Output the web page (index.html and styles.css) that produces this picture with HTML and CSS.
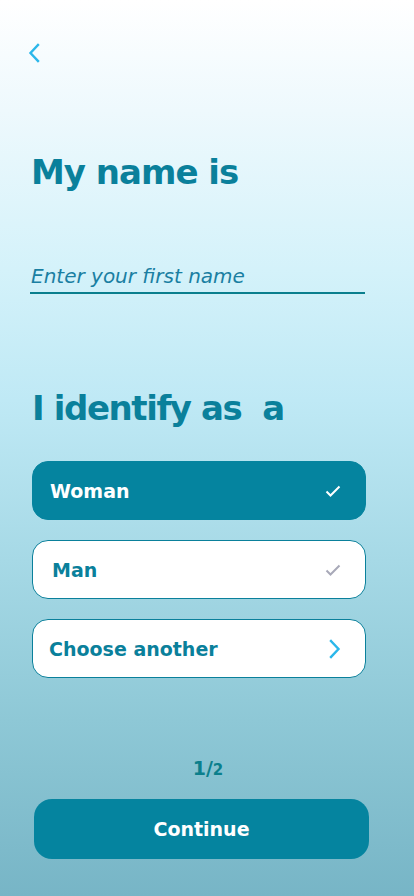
FILE: index.html
```html
<!DOCTYPE html>
<html lang="en">
<head>
<meta charset="utf-8">
<title>My name is</title>
<link rel="stylesheet" href="styles.css">
</head>
<body>
<main class="screen">
  <header class="topbar">
    <button class="back" aria-label="Back">
      <svg width="12" height="20" viewBox="0 0 12 20"><path d="M10 2 L2.5 10 L10 18" fill="none" stroke="#2bb7ea" stroke-width="2.4" stroke-linecap="square"/></svg>
    </button>
  </header>

  <h1 class="title title-first">My name is</h1>

  <label class="field">
    <input class="field-input" type="text" placeholder="Enter your first name">
  </label>

  <h2 class="title title-second">I identify as&nbsp; a</h2>

  <div class="options">
    <div class="option option-selected">
      <span class="option-label">Woman</span>
      <svg class="option-icon" width="16" height="12" viewBox="0 0 16 12"><path d="M1.5 6.5 L5.5 10.5 L14.5 1.5" fill="none" stroke="#ffffff" stroke-width="2"/></svg>
    </div>
    <div class="option">
      <span class="option-label option-label-man">Man</span>
      <svg class="option-icon" width="16" height="12" viewBox="0 0 16 12"><path d="M1.5 6.5 L5.5 10.5 L14.5 1.5" fill="none" stroke="#a8a9b8" stroke-width="2"/></svg>
    </div>
    <div class="option">
      <span class="option-label option-label-other">Choose another</span>
      <svg class="option-icon option-chevron" width="12" height="20" viewBox="0 0 12 20"><path d="M2 2 L9.5 10 L2 18" fill="none" stroke="#2bb7ea" stroke-width="2.4" stroke-linecap="square"/></svg>
    </div>
  </div>

  <div class="spacer"></div>

  <p class="pager">1/<span class="pager-small">2</span></p>

  <button class="continue">Continue</button>
</main>
</body>
</html>
```

FILE: styles.css
```css
* { box-sizing: border-box; }

html, body {
  margin: 0;
  padding: 0;
}

body {
  font-family: "DejaVu Sans", "Inter", sans-serif;
  background: #78b6c7;
}

.screen {
  width: 414px;
  height: 896px;
  display: flex;
  flex-direction: column;
  background: linear-gradient(180deg,
    #ffffff 0px,
    #eef9fd 110px,
    #d4f2fa 270px,
    #bfe9f5 400px,
    #a6d9e6 560px,
    #8ec8d6 720px,
    #77b5c6 896px);
  overflow: hidden;
}

.topbar {
  height: 100px;
  padding: 42px 0 0 27px;
}

.back {
  background: none;
  border: 0;
  padding: 0;
  margin: 0;
  width: 14px;
  height: 22px;
  display: flex;
  align-items: center;
  justify-content: center;
  cursor: pointer;
}

.title {
  margin: 0;
  padding-left: 31px;
  font-family: "DejaVu Sans", sans-serif;
  font-weight: 700;
  font-size: 34px;
  line-height: 40px;
  color: #0a809b;
}

.title-first {
  margin-top: 52px;
  letter-spacing: -1px;
}

.field {
  display: block;
  margin: 72px 49px 0 30px;
  border-bottom: 2px solid #0a7f8e;
}

.field-input {
  width: 100%;
  border: 0;
  background: transparent;
  padding: 0 0 4px 1px;
  font-family: "DejaVu Sans", sans-serif;
  font-style: italic;
  font-size: 20px;
  line-height: 24px;
  color: #1a7fa2;
  outline: none;
}

.field-input::placeholder {
  color: #1a7fa2;
  opacity: 1;
}

.title-second {
  margin-top: 94px;
  font-size: 34px;
  letter-spacing: -1.4px;
  padding-left: 32px;
}

.options {
  display: flex;
  flex-direction: column;
  gap: 20px;
  margin: 33px 48px 0 32px;
}

.option {
  height: 59px;
  border-radius: 16px;
  background: #ffffff;
  border: 1px solid #0a809b;
  display: flex;
  align-items: center;
  justify-content: space-between;
  padding: 0 24px 0 16px;
}

.option-selected {
  background: #05849f;
  border-color: #05849f;
  padding-left: 17px;
}

.option-label {
  font-family: "DejaVu Sans", sans-serif;
  font-weight: 700;
  font-size: 19px;
  color: #0a809b;
}

.option-selected .option-label {
  color: #ffffff;
}

.option-label-man {
  padding-left: 3px;
}

.spacer {
  flex: 1;
}

.pager {
  margin: 0 0 18px 0;
  text-align: center;
  font-family: "DejaVu Sans", sans-serif;
  font-weight: 700;
  font-size: 19px;
  line-height: 22px;
  color: #0b7f8c;
  padding-left: 2px;
}

.pager-small {
  font-size: 15px;
}

.continue {
  margin: 0 45px 37px 34px;
  height: 60px;
  border: 0;
  border-radius: 18px;
  background: #05849f;
  color: #ffffff;
  font-family: "DejaVu Sans", sans-serif;
  font-weight: 700;
  font-size: 19px;
  cursor: pointer;
}
```
